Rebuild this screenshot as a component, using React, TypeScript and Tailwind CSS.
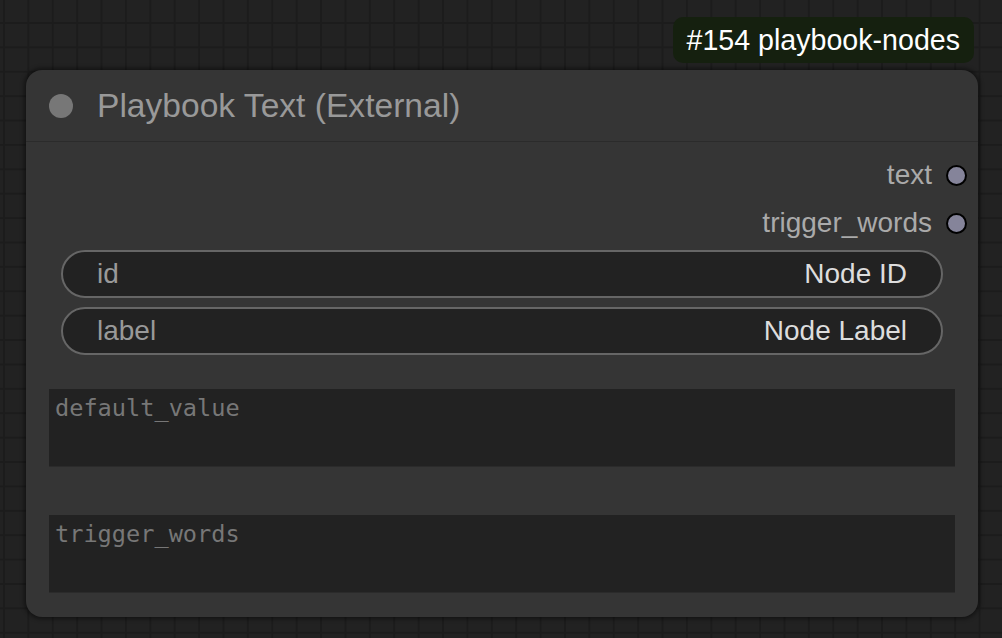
import React from 'react'

const sans = { fontFamily: '"Liberation Sans", Arial, sans-serif' }
const mono = { fontFamily: '"DejaVu Sans Mono", "Liberation Mono", monospace' }

function OutputSlot({ name }: { name: string }) {
  return (
    <div className="h-12 flex items-center justify-end pr-[11px]">
      <span className="text-[28px] text-[#aaaaaa] leading-none">{name}</span>
      <span className="ml-[14px] w-[21px] h-[21px] rounded-full bg-[#85849a] border-2 border-black" />
    </div>
  )
}

function PillWidget({ label, value }: { label: string; value: string }) {
  return (
    <div className="mx-[35px] h-12 rounded-full border-2 border-[#666666] bg-[#222222] flex items-center justify-between px-[34px]">
      <span className="text-[28px] text-[#999999] leading-none">{label}</span>
      <span className="text-[28px] text-[#dddddd] leading-none">{value}</span>
    </div>
  )
}

function TextBox({ placeholder }: { placeholder: string }) {
  return (
    <div className="mx-[23px] h-[78px] bg-[#222222] border-b border-[#2b2b2b] px-[6px] pt-[4px]">
      <span className="text-[23.6px] text-[#777777] leading-[30px]" style={mono}>
        {placeholder}
      </span>
    </div>
  )
}

export default function App() {
  return (
    <div
      className="w-[1002px] h-[638px] overflow-hidden bg-[#222222] bg-[linear-gradient(#1c1c1c_2px,transparent_2px),linear-gradient(90deg,#1c1c1c_2px,transparent_2px)] bg-[size:24.4px_24.4px] bg-[position:3px_22px] pt-[17px] pl-[26px]"
      style={sans}
    >
      <div className="w-[952px] flex flex-col">
        {/* Node badge */}
        <div className="flex justify-end pr-[4px]">
          <div className="h-[46px] px-[14px] rounded-[10px] bg-[#15200f] flex items-center">
            <span className="text-[28.6px] text-white leading-none">#154 playbook-nodes</span>
          </div>
        </div>

        {/* Node */}
        <div className="mt-[7px] h-[547px] rounded-[16px] bg-[#353535] shadow-[0_0_4px_2px_rgba(0,0,0,0.45)] flex flex-col">
          <div className="h-[72px] flex items-center pl-[23px] border-b border-[#2b2b2b]">
            <span className="w-[24px] h-[24px] rounded-full bg-[#777777]" />
            <span className="ml-[24px] text-[33.6px] text-[#999999] leading-none">Playbook Text (External)</span>
          </div>

          <div className="pt-[9px] flex flex-col">
            <OutputSlot name="text" />
            <OutputSlot name="trigger_words" />
            <div className="mt-[3px] flex flex-col gap-[9px]">
              <PillWidget label="id" value="Node ID" />
              <PillWidget label="label" value="Node Label" />
            </div>
            <div className="mt-[34px] flex flex-col gap-[48px]">
              <TextBox placeholder="default_value" />
              <TextBox placeholder="trigger_words" />
            </div>
          </div>
        </div>
      </div>
    </div>
  )
}
